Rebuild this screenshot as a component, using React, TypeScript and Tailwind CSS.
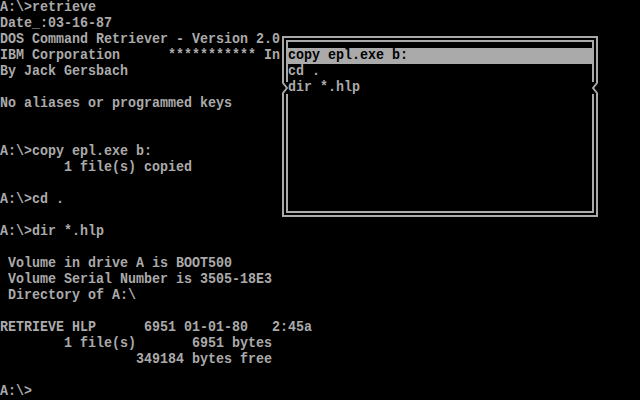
import React from 'react'

const screen = [
  'A:\\>retrieve',
  'Date_:03-16-87',
  'DOS Command Retriever - Version 2.0',
  'IBM Corporation      *********** In',
  'By Jack Gersbach',
  '',
  'No aliases or programmed keys',
  '',
  '',
  'A:\\>copy epl.exe b:',
  '        1 file(s) copied',
  '',
  'A:\\>cd .',
  '',
  'A:\\>dir *.hlp',
  '',
  ' Volume in drive A is BOOT500',
  ' Volume Serial Number is 3505-18E3',
  ' Directory of A:\\',
  '',
  'RETRIEVE HLP      6951 01-01-80   2:45a',
  '        1 file(s)       6951 bytes',
  '                 349184 bytes free',
  '',
  'A:\\>',
]

const history = ['copy epl.exe b:', 'cd .', 'dir *.hlp']

function Line({ text, className = '' }: { text: string; className?: string }) {
  return (
    <div className={`h-4 whitespace-pre ${className}`}>
      <span className="inline-block origin-center scale-y-[1.15]">{text || ' '}</span>
    </div>
  )
}

// the little pointer glyph that bends the double border
function Arrow({ flip }: { flip?: boolean }) {
  return (
    <svg width="8" height="16" viewBox="0 0 8 16" className={flip ? '-scale-x-100' : ''}>
      <rect x="0" y="0" width="8" height="16" fill="#000" />
      <polyline points="3,0 3,3 7,8 3,13 3,16" fill="none" stroke="#aaaaaa" strokeWidth="2" />
      <polyline points="7,0 7,2" fill="none" stroke="#aaaaaa" strokeWidth="2" />
      <polyline points="7,14 7,16" fill="none" stroke="#aaaaaa" strokeWidth="2" />
    </svg>
  )
}

export default function App() {
  return (
    <div className="relative w-[640px] h-[400px] overflow-hidden bg-black text-[#aaaaaa] font-['Liberation_Mono',monospace] font-bold text-[13.333px] leading-4">
      {/* terminal text */}
      <div className="flex flex-col">
        {screen.map((line, i) => (
          <Line key={i} text={line} />
        ))}
      </div>

      {/* retriever popup */}
      <div className="absolute left-[280px] top-[32px] w-[320px] h-[192px] bg-black pt-1 px-[2px]">
        <div className="h-[181px] border-2 border-[#aaaaaa] p-[2px] flex">
          <div className="flex-1 border-2 border-[#aaaaaa] pt-[6px] flex flex-col">
            {history.map((cmd, i) => (
              <Line key={cmd} text={cmd} className={i === 0 ? 'bg-[#aaaaaa] text-black' : ''} />
            ))}
          </div>
        </div>
        <div className="absolute left-0 top-[48px] flex">
          <Arrow />
        </div>
        <div className="absolute right-0 top-[48px] flex">
          <Arrow flip />
        </div>
      </div>
    </div>
  )
}
